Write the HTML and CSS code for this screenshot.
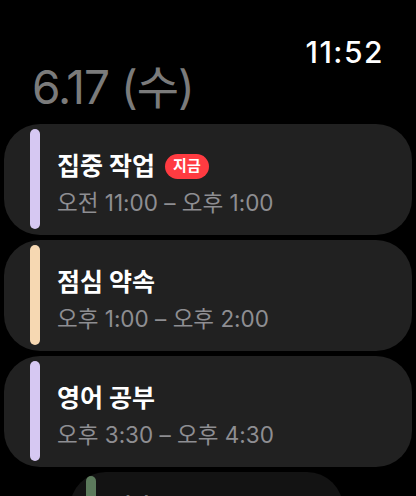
FILE: index.html
```html
<!DOCTYPE html>
<html lang="ko">
<head>
<meta charset="utf-8">
<link rel="stylesheet" href="styles.css">
</head>
<body>
<div class="screen">
  <header class="header">
    <div class="clock">11:52</div>
    <div class="date">6.17 (수)</div>
  </header>
  <div class="list">
    <div class="card">
      <div class="bar bar-lavender"></div>
      <div class="info">
        <div class="title">집중 작업 <span class="badge">지금</span></div>
        <div class="time">오전 11:00 – 오후 1:00</div>
      </div>
    </div>
    <div class="card">
      <div class="bar bar-peach"></div>
      <div class="info">
        <div class="title">점심 약속</div>
        <div class="time">오후 1:00 – 오후 2:00</div>
      </div>
    </div>
    <div class="card">
      <div class="bar bar-lavender"></div>
      <div class="info">
        <div class="title">영어 공부</div>
        <div class="time">오후 3:30 – 오후 4:30</div>
      </div>
    </div>
    <div class="card card-far">
      <div class="bar bar-green"></div>
      <div class="info">
        <div class="title title-dim">러닝</div>
      </div>
    </div>
  </div>
</div>
</body>
</html>
```
FILE: styles.css
```css
* { box-sizing: border-box; }
html, body { margin: 0; padding: 0; background: #000; }
body { font-family: Inter, "Noto Sans CJK KR", sans-serif; }
.screen {
  width: 416px;
  height: 496px;
  overflow: hidden;
  background: #000;
}
.header {
  display: flex;
  flex-direction: column;
  padding: 38px 33px 0 32px;
  height: 124px;
}
.clock {
  align-self: flex-end;
  color: #fff;
  font-size: 30px;
  font-weight: 500;
  line-height: 29px;
  height: 29px;
  letter-spacing: 1.5px;
  margin-right: -1px;
}
.date {
  margin-top: -3px;
  color: #7b7b7b;
  font-size: 46px;
  font-weight: 400;
  line-height: 46px;
  letter-spacing: -1px;
}
.list {
  display: flex;
  flex-direction: column;
  gap: 5px;
  padding: 0 4px;
}
.card {
  display: flex;
  height: 111px;
  padding: 5px 0 6px 26px;
  background: #212121;
  border-radius: 36px;
}
.bar {
  width: 10px;
  border-radius: 5px;
  flex: none;
}
.bar-lavender { background: #d6c8f2; }
.bar-peach { background: #f6d8b2; }
.bar-green { background: #5c7a5c; }
.info {
  display: flex;
  flex-direction: column;
  padding: 22px 0 0 17px;
}
.title {
  display: flex;
  align-items: center;
  gap: 10px;
  color: #fff;
  font-size: 25px;
  font-weight: 700;
  line-height: 30px;
  height: 30px;
}
.badge {
  display: inline-flex;
  align-items: center;
  justify-content: center;
  width: 44px;
  height: 25px;
  border-radius: 13px;
  background: #ff3b41;
  color: #fff;
  font-size: 15px;
  font-weight: 700;
}
.time {
  margin-top: 8px;
  color: #8e8e92;
  font-size: 22.5px;
  font-weight: 400;
  line-height: 28px;
}
.card-far {
  margin: 0 69px 0 66px;
  background: #131313;
  padding: 4px 0 6px 16px;
}
.card-far .info { padding-top: 15px; }
.title-dim { color: #8a8a8a; font-size: 20px; }
```
